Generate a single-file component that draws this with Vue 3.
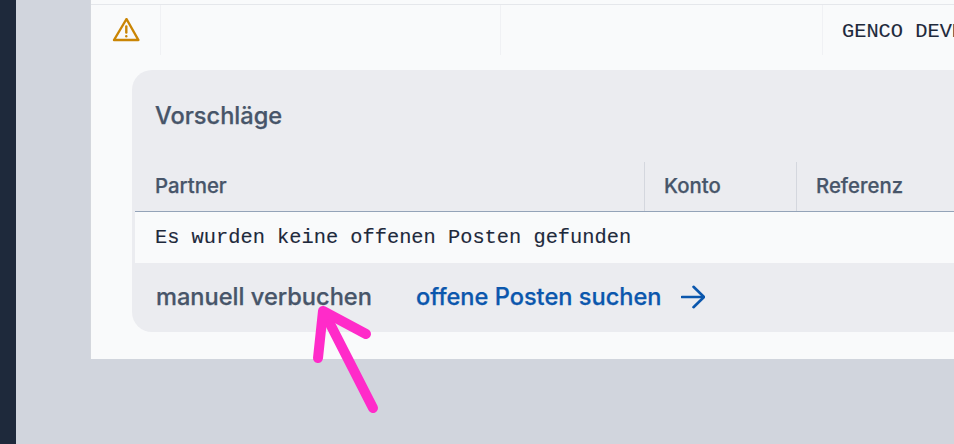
<script setup>
const columns = ['Partner', 'Konto', 'Referenz']
</script>

<template>
  <div class="page">
    <aside class="rail"></aside>
    <main class="main">
      <section class="panel">
        <div class="top-row">
          <div class="cell icon-cell">
            <svg class="warn" viewBox="0 0 28 24" width="28" height="24" fill="none" stroke="#ca8504" stroke-width="2.4" stroke-linejoin="round" stroke-linecap="round">
              <path d="M14.5 1 L26.4 22 H2 Z" />
              <path d="M14.3 8.4 V14.6" />
              <path d="M14.3 18.1 V18.3" />
            </svg>
          </div>
          <div class="cell wide"></div>
          <div class="cell mid"></div>
          <div class="cell text-cell">GENCO DEVELOPMENT</div>
        </div>

        <div class="card">
          <h2 class="title">Vorschläge</h2>
          <div class="table-head">
            <div v-for="c in columns" :key="c" class="th">{{ c }}</div>
          </div>
          <div class="empty">Es wurden keine offenen Posten gefunden</div>
          <div class="footer">
            <span class="manual">manuell verbuchen</span>
            <a class="search">
              <span>offene Posten suchen</span>
              <svg viewBox="0 0 24 24" width="24" height="24" fill="none" stroke="#0b57ad" stroke-width="2.6" stroke-linecap="round" stroke-linejoin="round">
                <path d="M1 12 H22.5" />
                <path d="M12.5 1.8 L23 12 L12.5 22.2" />
              </svg>
            </a>
          </div>
        </div>
      </section>
    </main>
    <svg class="annotation" viewBox="0 0 954 444" width="954" height="444" fill="none" stroke="#ff2bc9" stroke-width="10" stroke-linecap="round" stroke-linejoin="round">
      <path d="M373 408 L324 312" />
      <path d="M318 358 L323 311 L366 334" />
    </svg>
  </div>
</template>

<style>
html, body {
  margin: 0;
  overflow: hidden;
}
</style>

<style scoped>
.page {
  position: relative;
  display: flex;
  width: 954px;
  height: 444px;
  overflow: hidden;
  background: #d1d5dd;
  font-family: Inter, "Liberation Sans", sans-serif;
}
.rail {
  flex: 0 0 16px;
  background: #1e293b;
}
.main {
  flex: 1;
  min-width: 0;
  padding: 0 0 85px 74px;
}
.panel {
  box-sizing: border-box;
  width: 1000px;
  height: 359px;
  background: #f9fafb;
  padding-top: 4px;
  border-left: 1px solid #d4d7dd;
}
.top-row {
  box-sizing: border-box;
  display: flex;
  height: 51px;
  border-top: 1px solid #e5e7eb;
}
.cell {
  box-sizing: border-box;
  border-right: 1px solid #f0f1f4;
}
.icon-cell {
  width: 70px;
  display: flex;
  align-items: center;
  justify-content: center;
}
.wide {
  width: 340px;
}
.mid {
  width: 322px;
}
.text-cell {
  padding-left: 19px;
  border-right: 0;
  line-height: 54px;
  white-space: nowrap;
  font-family: "Liberation Mono", "DejaVu Sans Mono", monospace;
  font-size: 20.35px;
  color: #1e293b;
  -webkit-text-stroke: 0.12px #1e293b;
}
.card {
  box-sizing: border-box;
  width: 880px;
  height: 262px;
  margin: 15px 0 0 41px;
  padding-left: 3px;
  background: #ebecf0;
  border-radius: 20px 0 0 20px;
  display: flex;
  flex-direction: column;
}
.title {
  margin: 0;
  height: 92px;
  padding-left: 20px;
  font-size: 23.6px;
  font-weight: 500;
  line-height: 92px;
  color: #475569;
  -webkit-text-stroke: 0.25px #475569;
}
.table-head {
  display: grid;
  grid-template-columns: 509px 152px 1fr;
  height: 50px;
  box-sizing: border-box;
  border-bottom: 1px solid #94a3b8;
}
.th {
  box-sizing: border-box;
  padding-left: 19px;
  border-left: 1px solid #d4d7de;
  font-size: 20.35px;
  font-weight: 500;
  line-height: 48px;
  color: #475569;
  -webkit-text-stroke: 0.25px #475569;
}
.th:first-child {
  padding-left: 20px;
  border-left: 0;
}
.empty {
  height: 51px;
  padding-left: 20px;
  background: #f9fafb;
  font-family: "Liberation Mono", "DejaVu Sans Mono", monospace;
  font-size: 20.35px;
  line-height: 52px;
  color: #1e293b;
  -webkit-text-stroke: 0.12px #1e293b;
}
.footer {
  flex: 1;
  display: flex;
  align-items: center;
  gap: 44px;
  padding: 0 0 2px 21px;
  font-size: 23.6px;
  font-weight: 500;
  -webkit-text-stroke: 0.25px currentColor;
}
.manual {
  color: #475569;
}
.search {
  display: flex;
  align-items: center;
  gap: 19px;
  color: #0b57ad;
}
.annotation {
  position: absolute;
  left: 0;
  top: 0;
  pointer-events: none;
}
</style>
